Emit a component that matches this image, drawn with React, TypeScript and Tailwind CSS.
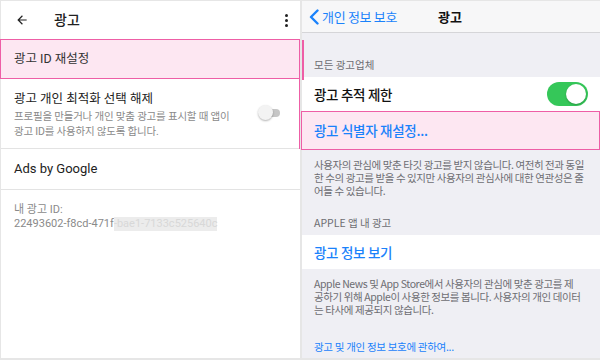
import React from "react";

const kr = { fontFamily: '"Noto Sans CJK KR", "Noto Sans", sans-serif' };
const android = { fontFamily: 'Roboto, "Noto Sans CJK KR", sans-serif' };

function AndroidPanel() {
  return (
    <div className="relative w-[299px] h-full bg-white flex flex-col" style={android}>
      <div className="h-[38px] flex items-center shrink-0">
        <svg width="14" height="14" viewBox="0 0 24 24" className="ml-[14px]">
          <path d="M20 11H7.83l5.59-5.59L12 4l-8 8 8 8 1.41-1.41L7.83 13H20v-2z" fill="#212121" />
        </svg>
        <span className="ml-[25px] text-[14px] font-medium text-[#212121]">광고</span>
        <div className="ml-auto mr-[12px] flex flex-col gap-[2px] items-center">
          <span className="w-[3px] h-[3px] rounded-full bg-[#212121]" />
          <span className="w-[3px] h-[3px] rounded-full bg-[#212121]" />
          <span className="w-[3px] h-[3px] rounded-full bg-[#212121]" />
        </div>
      </div>
      <div className="h-[40px] -ml-[1px] border-[1.5px] border-[#ee5ea6] bg-[#fde7f2] flex items-center pl-[13px] shrink-0">
        <span className="text-[12.5px] text-[#333]">광고 ID 재설정</span>
      </div>
      <div className="h-[70px] border-b border-[#e3e3e3] flex items-start pl-[13px] pr-[18px] pt-[12px] shrink-0">
        <div className="flex-1">
          <div className="text-[12.5px] text-[#222] leading-[16px]">광고 개인 최적화 선택 해제</div>
          <div className="text-[10.5px] text-[#8a8a8a] leading-[15px] mt-[2px] tracking-[-0.2px] whitespace-nowrap">
            프로필을 만들거나 개인 맞춤 광고를 표시할 때 앱이
            <br />
            광고 ID를 사용하지 않도록 합니다.
          </div>
        </div>
        <div className="relative w-[24px] h-[16px] mt-[14px] ml-[4px]">
          <div className="absolute left-[6px] top-[4px] w-[16px] h-[8px] rounded-full bg-[#c6c6c6]" />
          <div className="absolute left-0 top-0 w-[15px] h-[15px] rounded-full bg-[#f3f3f3] shadow-[0_1px_2px_rgba(0,0,0,0.3)]" />
        </div>
      </div>
      <div className="h-[41px] border-b border-[#e3e3e3] flex items-center pl-[13px] shrink-0">
        <span className="text-[13px] text-[#222]">Ads by Google</span>
      </div>
      <div className="pl-[13px] pt-[13px] text-[11px] text-[#8a8a8a] leading-[14px]">
        <div>내 광고 ID:</div>
        <div className="flex">
          <span>22493602-f8cd-471f</span>
          <span className="bg-[#ececec] text-[#d8d8d8]">-bae1-7133c525640c</span>
        </div>
      </div>
      <div className="absolute right-0 top-[78px] w-[1.5px] h-[70px] bg-[#ee5ea6]" />
    </div>
  );
}

function IosPanel() {
  return (
    <div className="relative flex-1 h-full bg-[#efeff4] flex flex-col" style={kr}>
      <div className="h-[32px] bg-[#f7f7f8] border-b border-[#d5d5d8] flex items-center relative shrink-0">
        <svg width="10" height="16" viewBox="0 0 10 16" className="ml-[7px]">
          <path d="M8.5 1.5 L2 8 L8.5 14.5" fill="none" stroke="#1a82fb" strokeWidth="2.4" strokeLinecap="round" strokeLinejoin="round" />
        </svg>
        <span className="ml-[3px] text-[13px] text-[#1a82fb] tracking-[-0.3px]">개인 정보 보호</span>
        <span className="absolute left-[136px] text-[13px] font-bold text-[#111]">광고</span>
      </div>
      <div className="h-[44px] flex items-end pl-[12px] pb-[4px] shrink-0">
        <span className="text-[10.5px] text-[#6d6d72]">모든 광고업체</span>
      </div>
      <div className="h-[34px] bg-white flex items-center pl-[12px] pr-[12px] shrink-0">
        <span className="text-[13.5px] font-medium text-[#111] tracking-[-0.3px]">광고 추적 제한</span>
        <div className="ml-auto w-[41px] h-[24px] rounded-full bg-[#35c759] relative">
          <div className="absolute right-[2px] top-[2px] w-[20px] h-[20px] rounded-full bg-white shadow-[0_1px_2px_rgba(0,0,0,0.25)]" />
        </div>
      </div>
      <div className="h-[39px] -ml-[1px] border-[1.5px] border-[#ee5ea6] bg-[#fde7f2] flex items-center pl-[12px] shrink-0">
        <span className="text-[13.5px] font-medium text-[#1a82fb] tracking-[-0.3px]">광고 식별자 재설정...</span>
      </div>
      <div className="h-[50px] pl-[12px] pt-[8px] text-[10.5px] leading-[13px] text-[#6d6d72] tracking-[-0.4px] whitespace-nowrap shrink-0">
        사용자의 관심에 맞춘 타깃 광고를 받지 않습니다. 여전히 전과 동일
        <br />
        한 수의 광고를 받을 수 있지만 사용자의 관심사에 대한 연관성은 줄
        <br />
        어들 수 있습니다.
      </div>
      <div className="h-[35px] flex items-end pl-[12px] pb-[4px] shrink-0">
        <span className="text-[10.5px] text-[#6d6d72]">APPLE 앱 내 광고</span>
      </div>
      <div className="h-[34px] bg-white flex items-center pl-[12px] shrink-0">
        <span className="text-[13.5px] font-medium text-[#1a82fb] tracking-[-0.3px]">광고 정보 보기</span>
      </div>
      <div className="pl-[12px] pt-[8px] text-[10.5px] leading-[13px] text-[#6d6d72] tracking-[-0.4px] whitespace-nowrap shrink-0">
        Apple News 및 App Store에서 사용자의 관심에 맞춘 광고를 제
        <br />
        공하기 위해 Apple이 사용한 정보를 봅니다. 사용자의 개인 데이터
        <br />
        는 타사에 제공되지 않습니다.
      </div>
      <div className="pl-[12px] mt-[24px] text-[10.5px] text-[#1a82fb] tracking-[-0.3px] leading-[13px]">광고 및 개인 정보 보호에 관하여...</div>
      <div className="absolute left-0 top-[39px] w-[1.5px] h-[40px] bg-[#ee5ea6]" />
    </div>
  );
}

export default function App() {
  return (
    <div className="w-[600px] h-[360px] bg-[#e6e6e6] flex gap-[2px] pt-[1px] pl-[1px] pb-[2px] overflow-hidden">
      <AndroidPanel />
      <IosPanel />
    </div>
  );
}
